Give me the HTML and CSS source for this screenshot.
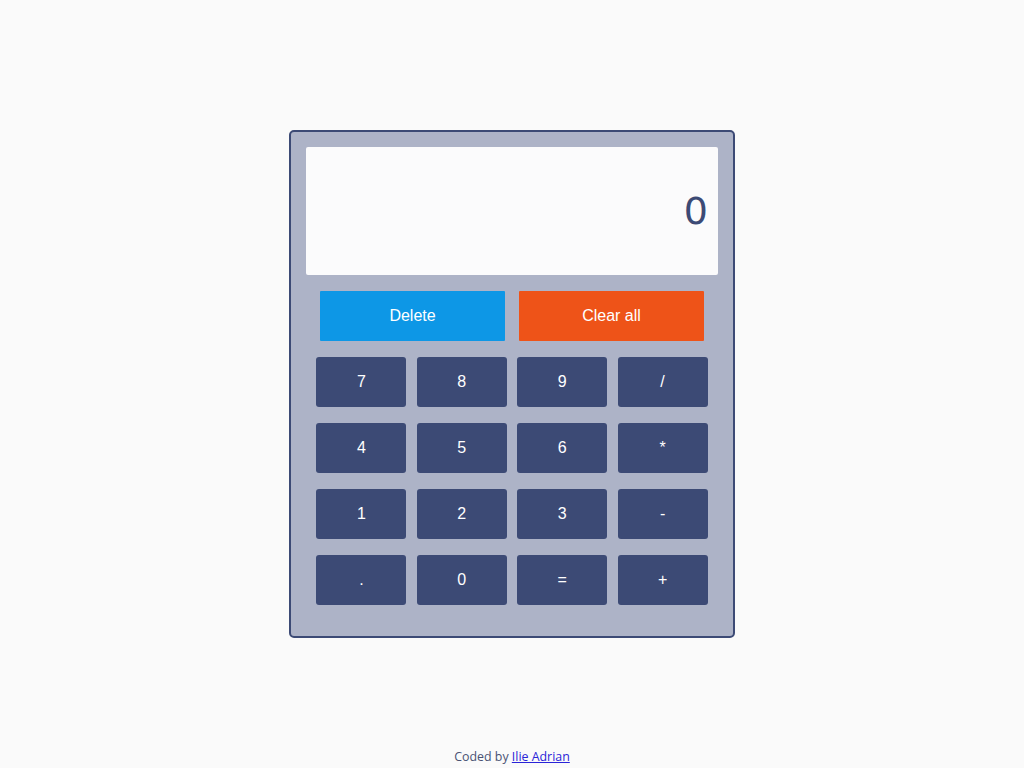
FILE: index.html
```html
<!DOCTYPE html>
<html lang="en">
<head>
<meta charset="utf-8">
<title>Calculator</title>
<link rel="stylesheet" href="styles.css">
</head>
<body>
<main class="page">
  <div class="calc">
    <div class="display"><span class="value">0</span></div>
    <div class="actions">
      <button class="btn-action btn-delete">Delete</button>
      <button class="btn-action btn-clear">Clear all</button>
    </div>
    <div class="keys">
      <div class="row"><button class="key">7</button><button class="key">8</button><button class="key">9</button><button class="key">/</button></div>
      <div class="row"><button class="key">4</button><button class="key">5</button><button class="key">6</button><button class="key">*</button></div>
      <div class="row"><button class="key">1</button><button class="key">2</button><button class="key">3</button><button class="key">-</button></div>
      <div class="row"><button class="key">.</button><button class="key">0</button><button class="key">=</button><button class="key">+</button></div>
    </div>
  </div>
</main>
<footer class="footer">Coded by <a href="#">Ilie Adrian</a></footer>
</body>
</html>
```

FILE: styles.css
```css
html, body {
  margin: 0;
  padding: 0;
}
body {
  background: #fafafa;
  font-family: "Liberation Sans", Arial, sans-serif;
  height: 100vh;
  position: relative;
}
.page {
  height: 100vh;
  display: flex;
  align-items: center;
  justify-content: center;
}
.calc {
  width: 412px;
  padding: 15px 15px 31px;
  background: #adb3c7;
  border: 2px solid #3c4a75;
  border-radius: 5px;
  display: flex;
  flex-direction: column;
  gap: 16px;
}
.display {
  height: 128px;
  background: #fbfbfc;
  display: flex;
  align-items: center;
  justify-content: flex-end;
  padding-right: 10px;
  box-sizing: border-box;
  border-radius: 2px;
}
.value {
  font-family: "DejaVu Sans", "Noto Sans", sans-serif;
  font-size: 38px;
  color: #3c4a75;
  line-height: 1;
}
.actions, .row {
  display: flex;
  justify-content: space-evenly;
}
.keys {
  display: flex;
  flex-direction: column;
  gap: 16px;
}
button {
  font-family: "Liberation Sans", Arial, sans-serif;
  font-size: 16px;
  color: #ffffff;
  border: none;
  height: 50px;
  padding: 0;
  cursor: pointer;
}
.btn-action {
  width: 185px;
  border-radius: 1px;
}
.btn-delete { background: #0d97e6; }
.btn-clear { background: #ee5318; }
.key {
  width: 90px;
  background: #3c4a75;
  border-radius: 3px;
}
.footer {
  position: absolute;
  left: 0;
  right: 0;
  bottom: 3px;
  text-align: center;
  font-family: "Open Sans", "Noto Sans", sans-serif;
  font-size: 12.4px;
  color: #4a5274;
}
.footer a {
  color: #2a24d8;
  text-decoration: underline;
}
```
